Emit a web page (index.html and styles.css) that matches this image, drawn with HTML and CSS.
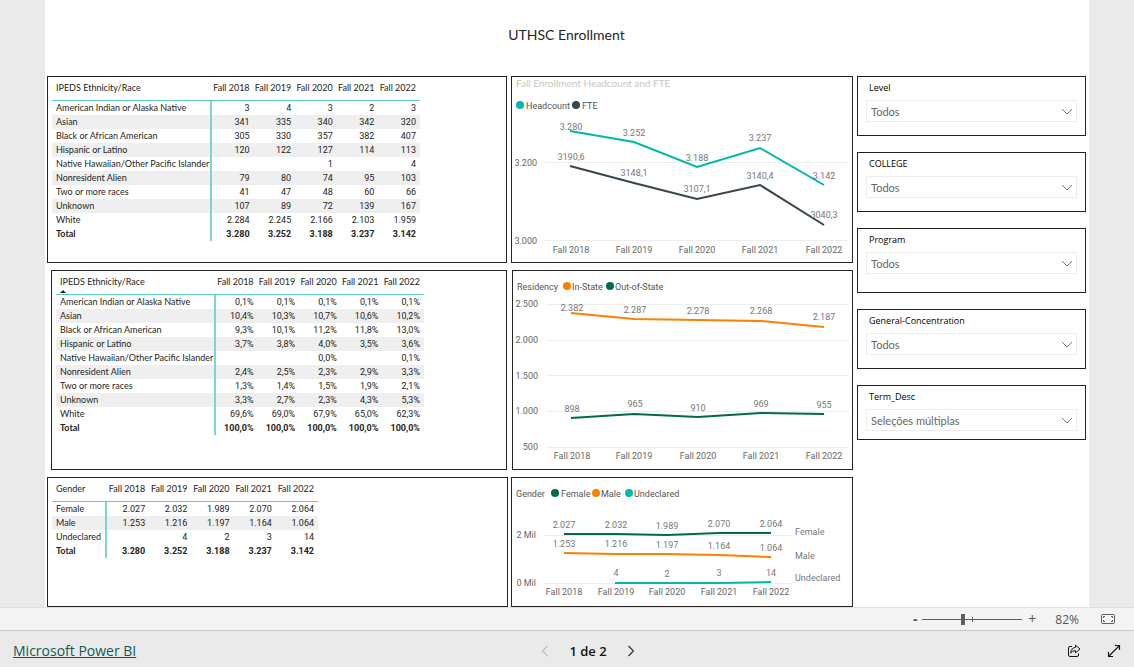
FILE: index.html
```html
<!DOCTYPE html>
<html lang="pt">
<head>
<meta charset="utf-8">
<title>UTHSC Enrollment</title>
<link rel="stylesheet" href="styles.css">
</head>
<body>
<main class="report">
  <h1 class="report-title">UTHSC Enrollment</h1>
  <div class="board">
    <div class="column">
      <section class="panel panel-counts">
        <table class="matrix">
          <thead><tr><th class="name">IPEDS Ethnicity/Race</th><th>Fall 2018</th><th>Fall 2019</th><th>Fall 2020</th><th>Fall 2021</th><th>Fall 2022</th></tr></thead>
          <tbody>
            <tr><th>American Indian or Alaska Native</th><td>3</td><td>4</td><td>3</td><td>2</td><td>3</td></tr>
            <tr><th>Asian</th><td>341</td><td>335</td><td>340</td><td>342</td><td>320</td></tr>
            <tr><th>Black or African American</th><td>305</td><td>330</td><td>357</td><td>382</td><td>407</td></tr>
            <tr><th>Hispanic or Latino</th><td>120</td><td>122</td><td>127</td><td>114</td><td>113</td></tr>
            <tr><th>Native Hawaiian/Other Pacific Islander</th><td></td><td></td><td>1</td><td></td><td>4</td></tr>
            <tr><th>Nonresident Alien</th><td>79</td><td>80</td><td>74</td><td>95</td><td>103</td></tr>
            <tr><th>Two or more races</th><td>41</td><td>47</td><td>48</td><td>60</td><td>66</td></tr>
            <tr><th>Unknown</th><td>107</td><td>89</td><td>72</td><td>139</td><td>167</td></tr>
            <tr><th>White</th><td>2.284</td><td>2.245</td><td>2.166</td><td>2.103</td><td>1.959</td></tr>
            <tr class="total"><th>Total</th><td>3.280</td><td>3.252</td><td>3.188</td><td>3.237</td><td>3.142</td></tr>
          </tbody>
        </table>
      </section>
      <section class="panel panel-shares">
        <table class="matrix">
          <thead><tr><th class="name"><span class="sorted">IPEDS Ethnicity/Race<svg class="sort" width="6" height="3" viewBox="0 0 6 3"><path d="M0 3 3 0l3 3z" fill="#252423"/></svg></span></th><th>Fall 2018</th><th>Fall 2019</th><th>Fall 2020</th><th>Fall 2021</th><th>Fall 2022</th></tr></thead>
          <tbody>
            <tr><th>American Indian or Alaska Native</th><td>0,1%</td><td>0,1%</td><td>0,1%</td><td>0,1%</td><td>0,1%</td></tr>
            <tr><th>Asian</th><td>10,4%</td><td>10,3%</td><td>10,7%</td><td>10,6%</td><td>10,2%</td></tr>
            <tr><th>Black or African American</th><td>9,3%</td><td>10,1%</td><td>11,2%</td><td>11,8%</td><td>13,0%</td></tr>
            <tr><th>Hispanic or Latino</th><td>3,7%</td><td>3,8%</td><td>4,0%</td><td>3,5%</td><td>3,6%</td></tr>
            <tr><th>Native Hawaiian/Other Pacific Islander</th><td></td><td></td><td>0,0%</td><td></td><td>0,1%</td></tr>
            <tr><th>Nonresident Alien</th><td>2,4%</td><td>2,5%</td><td>2,3%</td><td>2,9%</td><td>3,3%</td></tr>
            <tr><th>Two or more races</th><td>1,3%</td><td>1,4%</td><td>1,5%</td><td>1,9%</td><td>2,1%</td></tr>
            <tr><th>Unknown</th><td>3,3%</td><td>2,7%</td><td>2,3%</td><td>4,3%</td><td>5,3%</td></tr>
            <tr><th>White</th><td>69,6%</td><td>69,0%</td><td>67,9%</td><td>65,0%</td><td>62,3%</td></tr>
            <tr class="total"><th>Total</th><td>100,0%</td><td>100,0%</td><td>100,0%</td><td>100,0%</td><td>100,0%</td></tr>
          </tbody>
        </table>
      </section>
      <section class="panel panel-gender">
        <table class="matrix matrix-narrow">
          <thead><tr><th class="name">Gender</th><th>Fall 2018</th><th>Fall 2019</th><th>Fall 2020</th><th>Fall 2021</th><th>Fall 2022</th></tr></thead>
          <tbody>
            <tr><th>Female</th><td>2.027</td><td>2.032</td><td>1.989</td><td>2.070</td><td>2.064</td></tr>
            <tr><th>Male</th><td>1.253</td><td>1.216</td><td>1.197</td><td>1.164</td><td>1.064</td></tr>
            <tr><th>Undeclared</th><td></td><td>4</td><td>2</td><td>3</td><td>14</td></tr>
            <tr class="total"><th>Total</th><td>3.280</td><td>3.252</td><td>3.188</td><td>3.237</td><td>3.142</td></tr>
          </tbody>
        </table>
      </section>
    </div>

    <div class="column column-charts">
      <section class="panel">
        <svg class="chart" viewBox="512 77 340 185" role="img" aria-label="Fall Enrollment Headcount and FTE">
          <text class="chart-title" x="516" y="87">Fall Enrollment Headcount and FTE</text>
          <circle cx="520" cy="105" r="4" fill="#01b8aa"/><text class="legend" x="526" y="109">Headcount</text>
          <circle cx="576" cy="105" r="4" fill="#374649"/><text class="legend" x="582" y="109">FTE</text>
          <path class="rule" d="M545 162.500H848M545 240.500H848"/>
          <g class="axis axis-y"><text x="537" y="166">3.200</text><text x="537" y="244">3.000</text></g>
          <g class="axis"><text x="571" y="253">Fall 2018</text><text x="634" y="253">Fall 2019</text><text x="697" y="253">Fall 2020</text><text x="760" y="253">Fall 2021</text><text x="824" y="253">Fall 2022</text></g>
          <polyline class="line" stroke="#01b8aa" points="570,131 634,142 697,167 760,148 824,185"/>
          <polyline class="line" stroke="#374649" points="570,166 634,183 697,199 760,185 824,225"/>
          <g class="value"><text x="571" y="130">3.280</text><text x="634" y="136">3.252</text><text x="697" y="161">3.188</text><text x="760" y="141">3.237</text><text x="824" y="179">3.142</text>
          <text x="571" y="160">3190,6</text><text x="634" y="176">3148,1</text><text x="697" y="192">3107,1</text><text x="760" y="179">3140,4</text><text x="824" y="218">3040,3</text></g>
        </svg>
      </section>
      <section class="panel panel-residency">
        <svg class="chart" viewBox="513 271 339 198" role="img" aria-label="Residency">
          <text class="legend" x="517" y="290">Residency</text>
          <circle cx="567" cy="286" r="4" fill="#fd7f00"/><text class="legend" x="572" y="290">In-State</text>
          <circle cx="610" cy="286" r="4" fill="#016b4c"/><text class="legend" x="615" y="290">Out-of-State</text>
          <path class="rule" d="M546 304.500H849M546 340.500H849M546 375.500H849M546 411.500H849M546 447.500H849"/>
          <g class="axis axis-y"><text x="538" y="307">2.500</text><text x="538" y="343">2.000</text><text x="538" y="379">1.500</text><text x="538" y="414">1.000</text><text x="538" y="450">500</text></g>
          <g class="axis"><text x="572" y="459">Fall 2018</text><text x="634" y="459">Fall 2019</text><text x="698" y="459">Fall 2020</text><text x="761" y="459">Fall 2021</text><text x="824" y="459">Fall 2022</text></g>
          <polyline class="line" stroke="#fd7f00" points="571,313 634,319 698,320 761,321 824,327"/>
          <polyline class="line" stroke="#016b4c" points="571,418 634,414 698,417 761,413 824,414"/>
          <g class="value"><text x="572" y="311">2.382</text><text x="635" y="313">2.287</text><text x="698" y="314">2.278</text><text x="761" y="314">2.268</text><text x="824" y="320">2.187</text>
          <text x="572" y="412">898</text><text x="635" y="407">965</text><text x="698" y="411">910</text><text x="761" y="407">969</text><text x="824" y="408">955</text></g>
        </svg>
      </section>
      <section class="panel panel-trend">
        <svg class="chart" viewBox="512 478 340 128" role="img" aria-label="Gender">
          <text class="legend" x="516" y="497">Gender</text>
          <circle cx="555" cy="493" r="4" fill="#016b4c"/><text class="legend" x="561" y="497">Female</text>
          <circle cx="596" cy="493" r="4" fill="#fd7f00"/><text class="legend" x="601" y="497">Male</text>
          <circle cx="629" cy="493" r="4" fill="#01b8aa"/><text class="legend" x="634" y="497">Undeclared</text>
          <path class="rule" d="M544 535.500H791M544 583.500H791"/>
          <g class="axis axis-y"><text x="536" y="538">2 Mil</text><text x="536" y="586">0 Mil</text></g>
          <g class="axis"><text x="564" y="595">Fall 2018</text><text x="616" y="595">Fall 2019</text><text x="667" y="595">Fall 2020</text><text x="719" y="595">Fall 2021</text><text x="771" y="595">Fall 2022</text></g>
          <polyline class="line" stroke="#016b4c" points="564,534 616,534 667,535 719,533 771,533"/>
          <polyline class="line" stroke="#fd7f00" points="564,553 616,554 667,554 719,555 771,557"/>
          <polyline class="line" stroke="#01b8aa" points="615,583 667,583 719,583 771,582"/>
          <g class="value"><text x="564" y="528">2.027</text><text x="616" y="528">2.032</text><text x="667" y="529">1.989</text><text x="719" y="527">2.070</text><text x="771" y="527">2.064</text>
          <text x="564" y="547">1.253</text><text x="616" y="547">1.216</text><text x="667" y="548">1.197</text><text x="719" y="549">1.164</text><text x="771" y="551">1.064</text>
          <text x="616" y="576">4</text><text x="667" y="577">2</text><text x="719" y="576">3</text><text x="771" y="576">14</text></g>
          <g class="series"><text x="795" y="535">Female</text><text x="795" y="559">Male</text><text x="795" y="581">Undeclared</text></g>
        </svg>
      </section>
    </div>

    <div class="column column-filters">
      <section class="panel filter">
        <label for="level">Level</label>
        <div class="picker"><select id="level"><option>Todos</option></select><svg class="caret" viewBox="0 0 12 7"><path d="M1 1l5 5 5-5"/></svg></div>
      </section>
      <section class="panel filter">
        <label for="college">COLLEGE</label>
        <div class="picker"><select id="college"><option>Todos</option></select><svg class="caret" viewBox="0 0 12 7"><path d="M1 1l5 5 5-5"/></svg></div>
      </section>
      <section class="panel filter filter-tall">
        <label for="program">Program</label>
        <div class="picker"><select id="program"><option>Todos</option></select><svg class="caret" viewBox="0 0 12 7"><path d="M1 1l5 5 5-5"/></svg></div>
      </section>
      <section class="panel filter">
        <label for="concentration">General-Concentration</label>
        <div class="picker"><select id="concentration"><option>Todos</option></select><svg class="caret" viewBox="0 0 12 7"><path d="M1 1l5 5 5-5"/></svg></div>
      </section>
      <section class="panel filter filter-short">
        <label for="term">Term_Desc</label>
        <div class="picker"><select id="term"><option>Seleções múltiplas</option></select><svg class="caret" viewBox="0 0 12 7"><path d="M1 1l5 5 5-5"/></svg></div>
      </section>
    </div>
  </div>
</main>

<div class="zoombar">
  <button class="step" type="button" aria-label="Zoom out"><b>-</b></button>
  <input class="zoom" type="range" min="0" max="100" value="40" aria-label="Zoom">
  <button class="step" type="button" aria-label="Zoom in">+</button>
  <span class="percent">82%</span>
  <button class="icon-button" type="button" aria-label="Fit to page"><svg width="14" height="10" viewBox="0 0 14 10" fill="none" stroke="#605e5c"><rect x=".5" y=".5" width="13" height="9" rx="1"/><path d="M2.500 4V2.500H4M10 2.500h1.500V4M2.500 6v1.500H4M10 7.500h1.500V6"/></svg></button>
</div>

<footer class="footer">
  <div><a class="brand" href="#">Microsoft Power BI</a></div>
  <nav class="pager">
    <button class="icon-button" type="button" aria-label="Previous page" disabled><svg width="8" height="12" viewBox="0 0 8 12" fill="none" stroke="#c0bfbe" stroke-width="1.200"><path d="M6.500 1 1.500 6l5 5"/></svg></button>
    <span class="page">1 de 2</span>
    <button class="icon-button" type="button" aria-label="Next page"><svg width="8" height="12" viewBox="0 0 8 12" fill="none" stroke="#333" stroke-width="1.200"><path d="M1.500 1l5 5-5 5"/></svg></button>
  </nav>
  <div class="actions">
    <button class="icon-button" type="button" aria-label="Share"><svg width="14" height="14" viewBox="0 0 14 14" fill="none" stroke="#1a1022" stroke-linejoin="round"><path d="M5 2.500H3Q1.500 2.500 1.500 4v7q0 1.500 1.500 1.500h7q1.500 0 1.500-1.500V9.500"/><path d="M8.500 1.200 13 5 8.500 8.800V6.700Q5.300 6.500 3.700 9 4 4 8.500 3.400z"/></svg></button>
    <button class="icon-button" type="button" aria-label="Full screen"><svg width="14" height="14" viewBox="0 0 14 14" fill="none" stroke="#1a1022" stroke-width="1.200"><path d="M1.500 12.500l11-11M8 1.500h4.500V6M1.500 8v4.500H6"/></svg></button>
  </div>
</footer>
</body>
</html>
```

FILE: styles.css
```css
* { box-sizing: border-box; }

body {
  margin: 0;
  min-height: 100vh;
  display: flex;
  flex-direction: column;
  background: #eaeaea;
  color: #252423;
  font-family: "Open Sans", "Noto Sans", sans-serif;
  font-size: 9px;
}

button { padding: 0; border: 0; background: none; font: inherit; color: inherit; }

.report { flex: 1; margin: 0 45px; padding: 0 3px 0 2px; background: #fff; }
.report-title { margin: 0; height: 76px; padding-top: 24px; font-family: Lato, sans-serif; font-size: 14px; line-height: 22px; font-weight: 400; text-align: center; }

.board { display: grid; grid-template-columns: 461fr 343fr 229fr; column-gap: 3px; align-items: start; }
.column { display: flex; flex-direction: column; gap: 7px; }
.column-charts { padding-right: 1px; }
.column-filters { gap: 16px; }

.panel { border: 1px solid #252423; background: #fff; }
.panel-counts { min-height: 187px; margin-right: 1px; padding: 0 4px; }
.panel-shares { min-height: 200px; margin: 0 1px 0 4px; padding: 0 4px; }
.panel-gender { min-height: 130px; padding: 0 4px; }
.panel-residency { margin-left: 1px; }

.matrix { table-layout: fixed; width: 368px; border-collapse: separate; border-spacing: 0; font-family: Roboto, sans-serif; }
.matrix-narrow { width: 266px; }
.matrix th, .matrix td { height: 14px; padding: 0 4px 0 0; line-height: 14px; font-weight: 400; text-align: right; white-space: nowrap; }
.matrix th { font-family: Lato, sans-serif; }
.matrix th:first-child { padding: 0 0 0 4px; text-align: left; }
.matrix .name { width: 160px; }
.matrix-narrow .name { width: 55px; }
.matrix thead th, .matrix thead th:first-child { height: 24px; padding-top: 4px; padding-bottom: 5px; border-bottom: 1px solid #5fcdc4; vertical-align: top; }
.matrix tbody th { border-right: 2px solid #7fd5ce; }
.matrix tbody tr:nth-child(even):not(.total) { background: #efefef; }
.matrix .total th, .matrix .total td { font-weight: 700; }
.sorted { position: relative; display: inline-block; }
.sort { position: absolute; left: 0; top: 15px; }

.chart { display: block; width: 100%; height: auto; font-family: Roboto, sans-serif; font-size: 9px; }
.chart-title { font-family: Lato, sans-serif; font-size: 10px; fill: #c8c6c4; }
.legend { fill: #555; }
.rule { stroke: #ededed; stroke-width: 1; }
.line { fill: none; stroke-width: 2; }
.axis { fill: #666; text-anchor: middle; }
.axis-y { text-anchor: end; }
.value { fill: #777; text-anchor: middle; }
.series { fill: #777; }

.filter { min-height: 60px; padding: 4px 8px; color: #000; }
.filter-tall { min-height: 65px; }
.filter-short { min-height: 55px; }
.filter label { display: block; padding: 0 3px; line-height: 14px; }
.picker { display: grid; align-items: center; margin-top: 5px; }
.picker select { grid-area: 1 / 1; appearance: none; width: 100%; height: 22px; padding: 1px 4px 0; border: 1px solid #ededed; border-radius: 0; background: #fff; color: #666; font-family: Lato, sans-serif; font-size: 11px; }
.caret { grid-area: 1 / 1; justify-self: end; width: 12px; height: 7px; margin-right: 4px; fill: none; stroke: #777; pointer-events: none; }

.zoombar { display: flex; align-items: center; height: 24px; padding-right: 19px; justify-content: flex-end; border-top: 1px solid #dedede; border-bottom: 1px solid #c8c8c8; background: #f4f4f4; color: #555; font-size: 12px; }
.step { width: 10px; font-size: 14px; line-height: 20px; }
.zoom { appearance: none; width: 100px; height: 12px; margin: 0 5px 0 2px; background: linear-gradient(#605e5c, #605e5c) 50px 50% / 1px 5px no-repeat, linear-gradient(#605e5c, #605e5c) 0 50% / 100% 1px no-repeat; }
.zoom::-webkit-slider-thumb { appearance: none; width: 4px; height: 11px; background: #605e5c; }
.percent { margin: 0 22px 0 18px; }
.icon-button { display: grid; place-items: center; }

.footer { display: grid; grid-template-columns: 541fr auto 498fr; align-items: center; height: 36px; background: #eaeaea; padding: 4px 13px 0 13px; }
.brand { color: #0f5c56; font-size: 14px; line-height: 20px; text-decoration: underline; }
.pager { display: flex; align-items: center; gap: 20px; }
.page { color: #111; font-size: 13px; line-height: 20px; font-weight: 600; }
.actions { display: flex; justify-content: flex-end; gap: 26px; }
```
